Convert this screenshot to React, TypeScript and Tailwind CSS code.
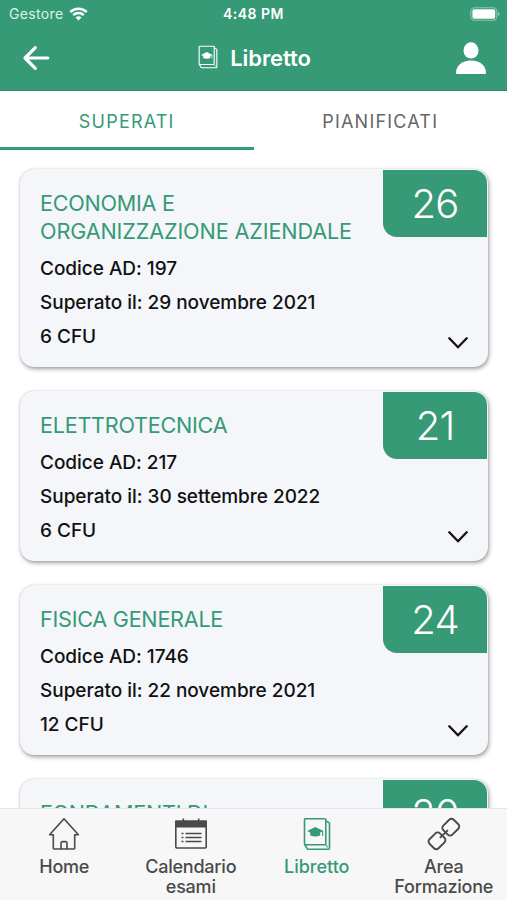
import type { ReactNode } from "react";

type Exam = { title: string[]; grade: number; details?: string[] };

const exams: Exam[] = [
  {
    title: ["ECONOMIA E", "ORGANIZZAZIONE AZIENDALE"],
    grade: 26,
    details: ["Codice AD: 197", "Superato il: 29 novembre 2021", "6 CFU"],
  },
  {
    title: ["ELETTROTECNICA"],
    grade: 21,
    details: ["Codice AD: 217", "Superato il: 30 settembre 2022", "6 CFU"],
  },
  {
    title: ["FISICA GENERALE"],
    grade: 24,
    details: ["Codice AD: 1746", "Superato il: 22 novembre 2021", "12 CFU"],
  },
  { title: ["FONDAMENTI DI"], grade: 20 },
];

function BookIcon({ className }: { className: string }) {
  return (
    <svg viewBox="0 0 28 34" fill="none" stroke="currentColor" strokeWidth="1.6" strokeLinejoin="round" className={className}>
      <rect x="1.5" y="1.7" width="21.3" height="26" rx="1" />
      <path d="M1.5 27.2L4.6 32.3h20.9a1 1 0 0 0 1-1V6.2L23 3.8" />
      <path d="M22.8 27.7l2 2.8" strokeWidth="1.1" />
      <path d="M12.3 9.9l8.2 4.2-3.3 1.5v3c-2.9-1-6.9-1-9.8 0v-3l-3.3-1.5z" fill="currentColor" stroke="none" />
      <path d="M7.6 14.8h9.4v3.6c-2.9 1.4-6.5 1.4-9.4 0z" fill="currentColor" stroke="none" />
      <path d="M19.6 14v5" strokeWidth="1.1" />
    </svg>
  );
}

function Header() {
  return (
    <header className="h-[91px] shrink-0 border-b border-[#2e8a69] bg-[#359a75] text-white">
      <div className="grid h-[27px] grid-cols-3 items-center pl-[9px] pr-[7px] text-[14px]">
        <div className="flex items-center gap-[6px] text-[#dcf3e9]">
          <span className="tracking-[0.35px]">Gestore</span>
          <svg viewBox="0 0 20 15" className="-ml-px h-[14px] w-[19px]" fill="none" stroke="white" strokeWidth="2.7">
            <path d="M1.2 5.4a12.6 12.6 0 0 1 17.6 0" />
            <path d="M4.4 8.8a8 8 0 0 1 11.2 0" />
            <path d="M10 14.5l-3.2-3.2a4.5 4.5 0 0 1 6.4 0z" fill="white" stroke="none" />
          </svg>
        </div>
        <span className="-ml-[2px] text-center font-semibold tracking-[0.5px]">4:48 PM</span>
        <div className="flex justify-end">
          <svg viewBox="0 0 30 14" className="h-[14px] w-[30px]">
            <rect x="0.8" y="0.8" width="26" height="12.4" rx="3.6" fill="none" stroke="#8bc8b0" strokeWidth="1.1" />
            <rect x="2.4" y="2.3" width="22.8" height="9.4" rx="1.8" fill="white" />
            <path d="M28 4.8c2 .8 2 3.6 0 4.4z" fill="#8bc8b0" />
          </svg>
        </div>
      </div>
      <div className="grid h-[62px] grid-cols-[60px_1fr_60px] items-center">
        <svg viewBox="0 0 28 26" className="ml-[22px] h-[26px] w-7" fill="none" stroke="white" strokeWidth="3.2" strokeLinecap="round" strokeLinejoin="round">
          <path d="M13.3 2.7L3 13l10.3 10.3M3.5 13h22.3" />
        </svg>
        <h1 className="flex items-center justify-center gap-3 pl-[2px] text-[22px] font-semibold leading-7 tracking-[-0.1px]">
          <BookIcon className="-mt-[3px] h-6 w-5" />
          <span>Libretto</span>
        </h1>
        <svg viewBox="0 0 30 33" className="ml-[9px] h-[33px] w-[30px]" fill="white">
          <ellipse cx="15" cy="8.4" rx="7.5" ry="8.1" />
          <path d="M0 31C0 23.5 6 18.5 15 18.5s15 5 15 12.5c0 .8-.6 1-1.4 1H1.4c-.8 0-1.4-.2-1.4-1z" />
        </svg>
      </div>
    </header>
  );
}

function ExamCard({ exam }: { exam: Exam }) {
  return (
    <article className="relative min-h-[170px] shrink-0 rounded-[14px] bg-[#f4f6fa] pb-[13px] pl-5 pt-5 shadow-[1px_2px_4px_rgba(0,0,0,0.38),0_0_1px_rgba(0,0,0,0.25)]">
      <h2 className="text-[21.6px] font-[430] leading-7 tracking-[-0.25px] text-[#359a75]">
        {exam.title.map((line) => (
          <span key={line} className={line.length > 20 ? "block tracking-[-0.12px]" : "block"}>{line}</span>
        ))}
      </h2>
      {exam.details && (
        <div className="mt-[7px] text-[19px] font-medium leading-[34px] tracking-[-0.03px] text-[#111]">
          {exam.details.map((line) => (
            <p key={line}>{line}</p>
          ))}
        </div>
      )}
      <span className="absolute right-px top-[0.5px] flex h-[67px] w-[104px] items-center justify-center rounded-bl-[14px] rounded-tr-[13px] bg-[#359a75] pt-[2px] text-[40px] font-[360] tracking-[-0.8px] text-white">
        {exam.grade}
      </span>
      {exam.details && (
        <svg viewBox="0 0 20 12" className="absolute bottom-[18px] right-5 h-3 w-5" fill="none" stroke="#111" strokeWidth="2.3" strokeLinecap="round" strokeLinejoin="round">
          <path d="M1.3 1.3L10 10.3l8.7-9" />
        </svg>
      )}
    </article>
  );
}

function NavItem({ icon, lines, active }: { icon: ReactNode; lines: string[]; active?: boolean }) {
  return (
    <button className={active ? "-ml-px flex flex-col items-center pt-2 text-[#359a75]" : "flex flex-col items-center pt-2 text-[#4a4a4a]"}>
      <span className="flex h-[34px] items-center justify-center">{icon}</span>
      <span className={active ? "mt-[6px] text-[18px] font-medium leading-[19.5px]" : "mt-[6px] text-[18px] font-medium leading-[19.5px] tracking-[-0.22px]"}>
        {lines.map((line) => (
          <span key={line} className="block">{line}</span>
        ))}
      </span>
    </button>
  );
}

export default function App() {
  return (
    <div className="flex h-[900px] w-[507px] flex-col overflow-hidden bg-white font-[Inter,sans-serif]">
      <Header />
      <div className="grid h-[59px] shrink-0 grid-cols-2 text-[18px] tracking-[1.2px]">
        <button className="border-b-[3px] border-[#359a75] pt-[5px] text-[#359a75]">SUPERATI</button>
        <button className="border-b-[3px] border-transparent pt-[5px] text-[#666]">PIANIFICATI</button>
      </div>
      <main className="flex min-h-0 flex-1 flex-col gap-6 overflow-hidden pl-5 pr-[19px] pt-[19.4px]">
        {exams.map((exam) => (
          <ExamCard key={exam.title[0]} exam={exam} />
        ))}
      </main>
      <nav className="relative grid h-[92px] shrink-0 grid-cols-4 border-t border-[#e4e4e4] bg-[#f7f7f7] pl-px">
        <NavItem
          lines={["Home"]}
          icon={
            <svg viewBox="0 0 32 34" className="h-[34px] w-8" fill="none" stroke="currentColor" strokeWidth="1.6" strokeLinejoin="round">
              <path d="M5.3 17.8H1.6L16 1.8l14.4 16h-3.7v13.4a.8.8 0 0 1-.8.8H6.1a.8.8 0 0 1-.8-.8z" />
              <path d="M13 32v-5.6a1.8 1.8 0 0 1 1.8-1.8h2.4a1.8 1.8 0 0 1 1.8 1.8V32" />
            </svg>
          }
        />
        <NavItem
          lines={["Calendario", "esami"]}
          icon={
            <svg viewBox="0 0 34 34" className="h-[34px] w-[34px]" fill="none" stroke="currentColor" strokeWidth="1.6">
              <path d="M9.3 1.5v3M24.7 1.5v3" />
              <path d="M1.8 4.2h30.4v5.6H1.8z" fill="currentColor" />
              <rect x="1.8" y="4.2" width="30.4" height="26.8" rx="1" />
              <path d="M11.5 16.5h16M11.5 20.5h16M11.5 24.5h16M7.5 16.5h2M7.5 20.5h2M7.5 24.5h2" strokeWidth="1.7" />
            </svg>
          }
        />
        <NavItem active lines={["Libretto"]} icon={<BookIcon className="h-[34px] w-7" />} />
        <NavItem
          lines={["Area", "Formazione"]}
          icon={
            <svg viewBox="0 0 34 34" className="h-[34px] w-[34px]" fill="none" stroke="currentColor" strokeWidth="1.9" strokeLinecap="round">
              <rect x="-7.4" y="-6.4" width="14.8" height="12.8" rx="3.2" transform="translate(23.8 10.2) rotate(-45)" />
              <rect x="-7.4" y="-6.4" width="14.8" height="12.8" rx="3.2" transform="translate(10 23.8) rotate(-45)" />
              <path d="M13.4 20.4l7-6.8" />
            </svg>
          }
        />
      </nav>
    </div>
  );
}
